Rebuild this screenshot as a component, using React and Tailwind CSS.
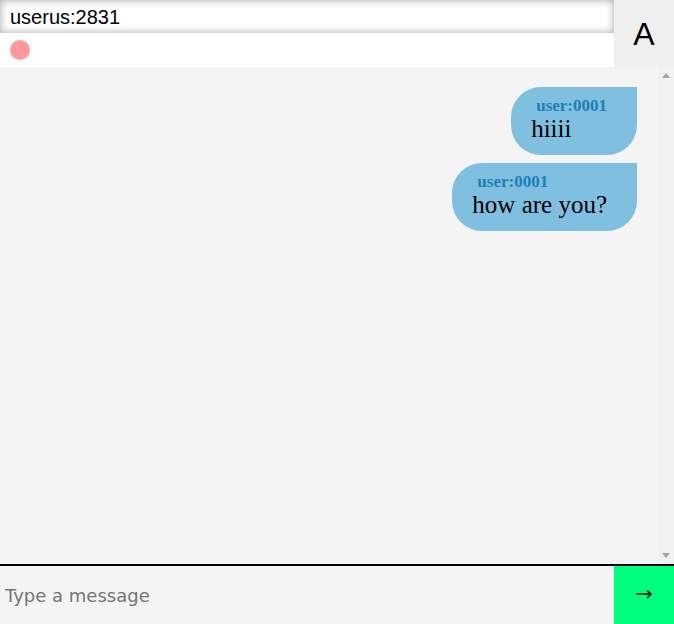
import React from 'react';

const messages = [
  { user: 'user:0001', text: 'hiiii' },
  { user: 'user:0001', text: 'how are you?' },
];

function ScrollTrack() {
  return (
    <div className="w-[16px] shrink-0 bg-[#f1f1f1] flex flex-col justify-between items-center py-[6px]">
      <svg width="8" height="5" viewBox="0 0 8 5"><path d="M4 0 L8 5 L0 5 Z" fill="#a3a3a3" /></svg>
      <svg width="8" height="5" viewBox="0 0 8 5"><path d="M0 0 L8 0 L4 5 Z" fill="#a3a3a3" /></svg>
    </div>
  );
}

export default function App() {
  return (
    <div className="h-[624px] w-full flex flex-col bg-[#f4f4f4] font-['Liberation_Sans',Arial,sans-serif]">
      {/* Header */}
      <header className="flex h-[67px] shrink-0">
        <div className="flex-1 flex flex-col">
          <div className="h-[33px] bg-white shadow-[inset_0_0_8px_rgba(0,0,0,0.35)] px-[10px] flex items-center text-[20px] text-black">
            userus:2831
          </div>
          <div className="h-[34px] bg-white flex items-center px-[10px]">
            <span className="w-[20px] h-[20px] rounded-full bg-[#ff9999]" />
          </div>
        </div>
        <button className="w-[60px] h-full bg-[#efefef] flex items-center justify-center text-[32px] text-black">
          A
        </button>
      </header>

      {/* Messages */}
      <div className="flex-1 flex min-h-0">
        <main className="flex-1 overflow-hidden bg-[#f4f4f4] pt-[20px] pr-[21px] flex flex-col items-end gap-[8px]">
          {messages.map((m, i) => (
            <div
              key={i}
              className="bg-[#7fbfdf] rounded-[30px] rounded-tr-none pl-[20px] pr-[30px] pt-[9px] pb-[12px] font-['Liberation_Serif','Times_New_Roman',serif]"
            >
              <div className="ml-[5px] text-[17px] leading-[19px] font-bold text-[#1d80b8]">{m.user}</div>
              <div className="text-[25px] leading-[28px] text-black">{m.text}</div>
            </div>
          ))}
        </main>
        <ScrollTrack />
      </div>

      {/* Composer */}
      <footer className="h-[60px] shrink-0 border-t-2 border-black flex">
        <input
          className="flex-1 bg-[#f4f4f4] px-[5px] text-[18px] outline-none font-['DejaVu_Sans',Verdana,sans-serif] placeholder:text-[#757575]"
          placeholder="Type a message"
        />
        <button className="w-[60px] bg-[#00ff7f] flex items-center justify-center text-[21px] text-[#0a2a14] font-['DejaVu_Sans',sans-serif]">
          →
        </button>
      </footer>
    </div>
  );
}
